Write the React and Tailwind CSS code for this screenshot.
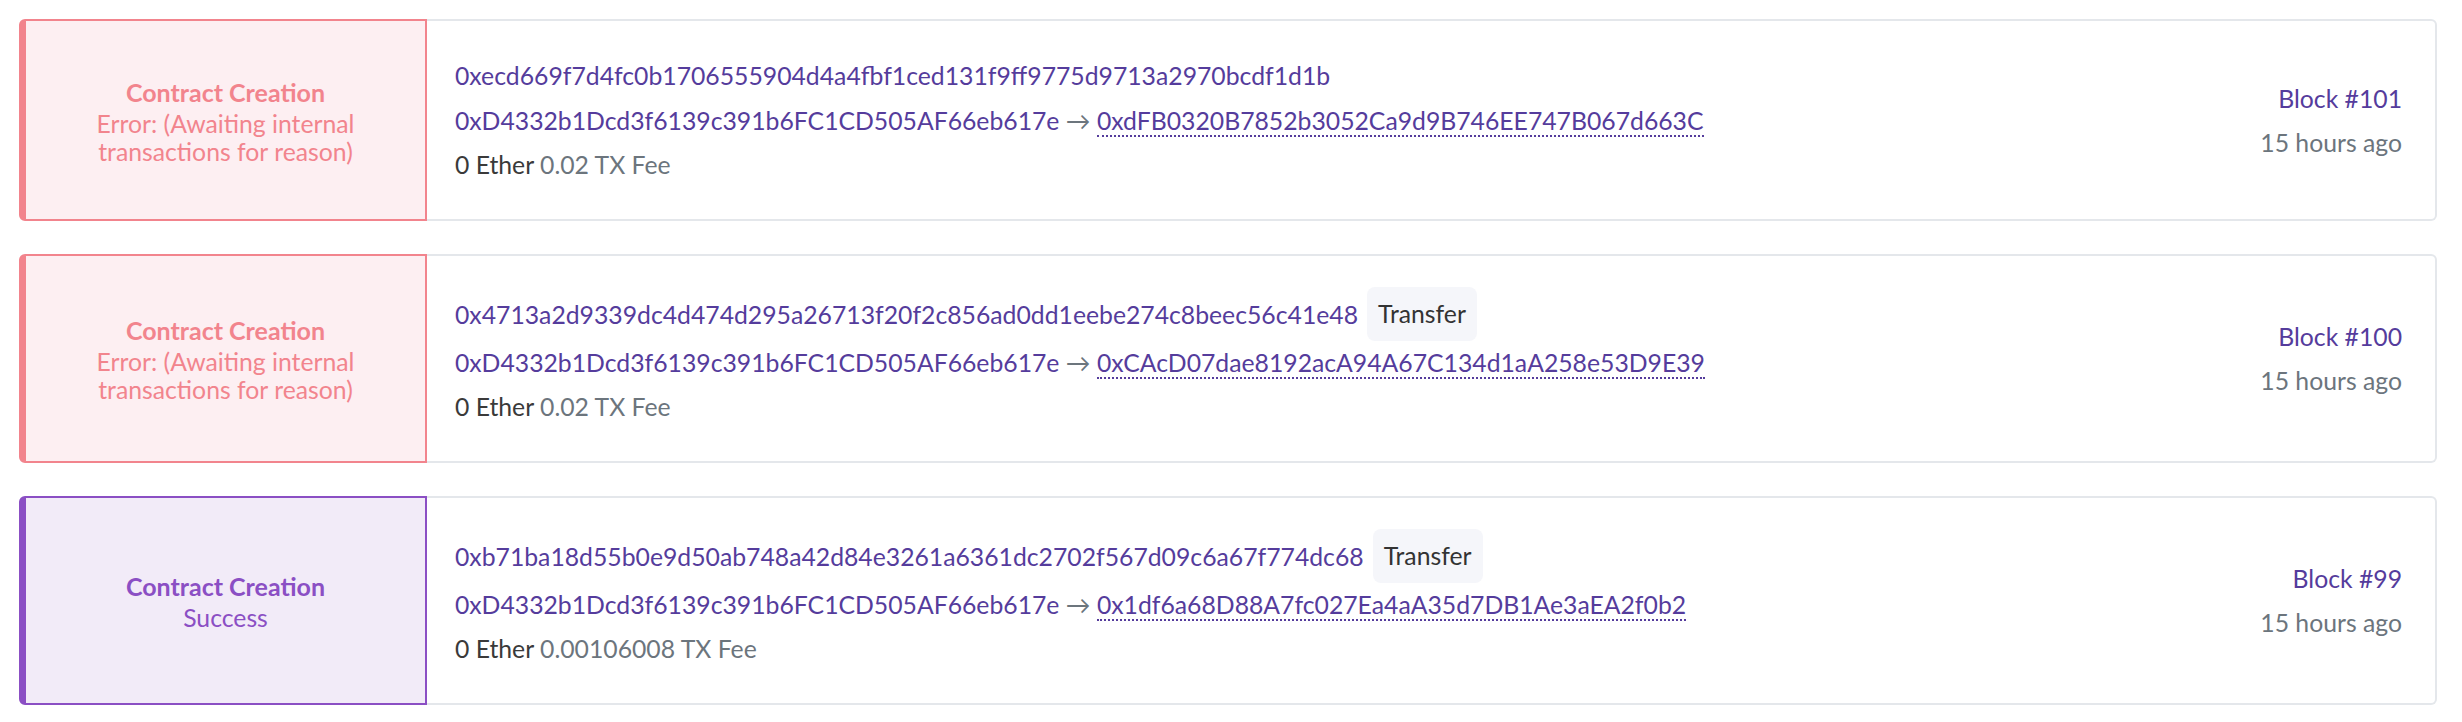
import React from "react";

const FROM = "0xD4332b1Dcd3f6139c391b6FC1CD505AF66eb617e";

const txs = [
  {
    status: "error",
    hash: "0xecd669f7d4fc0b1706555904d4a4fbf1ced131f9ff9775d9713a2970bcdf1d1b",
    badge: false,
    to: "0xdFB0320B7852b3052Ca9d9B746EE747B067d663C",
    fee: "0.02",
    block: 101,
  },
  {
    status: "error",
    hash: "0x4713a2d9339dc4d474d295a26713f20f2c856ad0dd1eebe274c8beec56c41e48",
    badge: true,
    to: "0xCAcD07dae8192acA94A67C134d1aA258e53D9E39",
    fee: "0.02",
    block: 100,
  },
  {
    status: "success",
    hash: "0xb71ba18d55b0e9d50ab748a42d84e3261a6361dc2702f567d09c6a67f774dc68",
    badge: true,
    to: "0x1df6a68D88A7fc027Ea4aA35d7DB1Ae3aEA2f0b2",
    fee: "0.00106008",
    block: 99,
  },
];

const panelStyles = {
  error: "border-[#f2848d] bg-[#fdeff2] text-[#f2848d]",
  success: "border-[#8b4fc4] bg-[#f2ebf8] text-[#8b4fc4]",
};

function Tile({ tx }) {
  return (
    <div className="flex">
      <div
        className={
          "w-[408px] shrink-0 flex flex-col items-center justify-center text-center px-[30px] border-y-2 border-r-2 border-l-[7px] rounded-l-[6px] " +
          panelStyles[tx.status]
        }
      >
        <div className="font-bold text-[25px] leading-[35px]">Contract Creation</div>
        {tx.status === "error" ? (
          <div className="text-[24.75px] leading-[28px]">
            Error: (Awaiting internal transactions for reason)
          </div>
        ) : (
          <div className="text-[24.75px] leading-[28px]">Success</div>
        )}
      </div>
      <div className="flex-1 flex border-y-2 border-r-2 border-[#e4e7eb] rounded-r-[6px] bg-white">
        <div className="flex-1 pl-[28px] pt-[31px] pb-[38px] text-[24.75px]">
          <div className="flex items-center min-h-[47px]">
            <span className="text-[#553c9c] leading-[33px]">{tx.hash}</span>
            {tx.badge && (
              <span className="ml-[9px] h-[54px] flex items-center px-[11px] rounded-[8px] bg-[#f5f6fa] text-[#333333]">
                Transfer
              </span>
            )}
          </div>
          <div className="mt-[5px] leading-[33px] whitespace-nowrap">
            <span className="text-[#553c9c]">{FROM}</span>
            <span className="text-[#6c757d]"> → </span>
            <span className="text-[#553c9c] border-b-2 border-dotted border-[#553c9c]">{tx.to}</span>
          </div>
          <div className="mt-[11px] leading-[33px]">
            <span className="text-[#3a3a3a]">0 Ether</span>{" "}
            <span className="text-[#6c757d]">{tx.fee} TX Fee</span>
          </div>
        </div>
        <div className="flex flex-col items-end justify-center pr-[33px] text-[24.75px] leading-[33px] gap-[11px]">
          <div className="text-[#553c9c]">Block #{tx.block}</div>
          <div className="text-[#6c757d]">15 hours ago</div>
        </div>
      </div>
    </div>
  );
}

export default function App() {
  return (
    <div
      className="min-h-[722px] bg-white pt-[19px] pl-[19px] pr-[25px] flex flex-col gap-[33px]"
      style={{ fontFamily: "Lato, 'Noto Sans', sans-serif" }}
    >
      {txs.map((tx) => (
        <Tile key={tx.hash} tx={tx} />
      ))}
    </div>
  );
}
